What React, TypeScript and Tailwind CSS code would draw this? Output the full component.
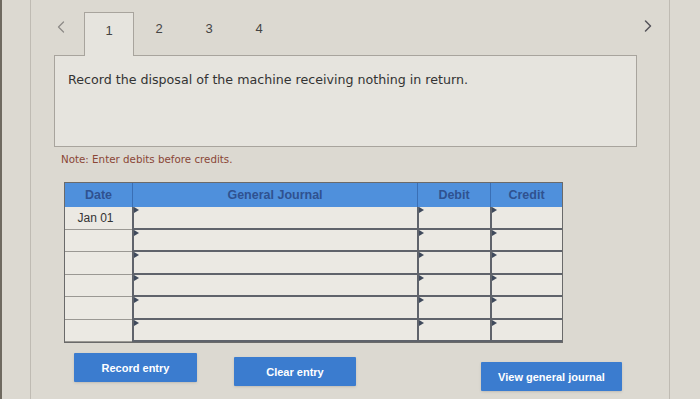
import { ChevronLeft, ChevronRight } from "lucide-react"

const rows = ["Jan 01", "", "", "", "", ""]

function Marker() {
  return (
    <span className="absolute left-0 top-0 w-0 h-0 border-t-[3px] border-b-[3px] border-l-[5px] border-t-transparent border-b-transparent border-l-[#3f4a5c]" />
  )
}

function InputCell() {
  return (
    <div className="relative h-[22.5px] bg-[#ebe9e3] border-l-2 border-b-2 border-[#5f636b]">
      <Marker />
    </div>
  )
}

export default function App() {
  return (
    <div className="w-[700px] h-[399px] bg-[#dcd9d1] border-l-2 border-[#6f6a60] overflow-hidden font-['Liberation_Sans',Arial,sans-serif]">
      <div className="ml-[28px] mr-[30px] h-full border-l border-r border-[#bfbbb3] pl-[23px] pr-[10px]">
        {/* tabs row */}
        <div className="flex items-end h-[55px]">
          <ChevronLeft className="w-[20px] h-[20px] text-[#8d8b88] mb-[18px] ml-[-3px]" strokeWidth={1.5} />
          <div className="flex ml-[13px] items-end">
            <div className="w-[50px] h-[44px] bg-[#e6e4de] border border-b-0 border-[#a8a49d] -mb-px relative z-10 flex items-start justify-center pt-[8px] text-[13px] text-[#444]">
              1
            </div>
            {["2", "3", "4"].map((t) => (
              <div key={t} className="w-[50px] h-[44px] flex items-start justify-center pt-[8px] text-[13px] text-[#444]">
                {t}
              </div>
            ))}
          </div>
          <div className="flex-1" />
          <ChevronRight className="w-[20px] h-[20px] text-[#55545a] mb-[19px] mr-[1px]" strokeWidth={1.8} />
        </div>

        {/* question box */}
        <div className="w-[583px] h-[92px] bg-[#e6e4de] border border-[#a8a49d] px-[13px] pt-[15px] font-['DejaVu_Sans',Verdana,sans-serif] text-[12.65px] text-[#333]">
          Record the disposal of the machine receiving nothing in return.
        </div>

        <p className="mt-[5px] ml-[7px] font-['DejaVu_Sans',Verdana,sans-serif] text-[10.3px] text-[#8a4636]">
          Note: Enter debits before credits.
        </p>

        {/* journal table */}
        <div className="mt-[15px] ml-[10px] w-[499px] border border-[#6a6a6a] bg-[#ebe9e3]">
          <div className="grid grid-cols-[67px_285px_73px_72px] h-[24px] bg-[#4f90dc] text-[12.5px] font-bold text-[#2f5290]">
            <div className="flex items-center justify-center">Date</div>
            <div className="flex items-center justify-center border-l border-[#3a6fb5]">General Journal</div>
            <div className="flex items-center justify-center border-l border-[#3a6fb5]">Debit</div>
            <div className="flex items-center justify-center border-l border-[#3a6fb5]">Credit</div>
          </div>
          {rows.map((d, i) => (
            <div key={i} className="grid grid-cols-[67px_285px_73px_72px]">
              <div className="h-[22.5px] border-b border-[#9a9893] flex items-center justify-center text-[12px] text-[#333] pr-[6px]">
                {d}
              </div>
              <InputCell />
              <InputCell />
              <InputCell />
            </div>
          ))}
        </div>

        {/* buttons */}
        <div className="flex items-start mt-[8px] ml-[20px]">
          <button className="w-[123px] h-[29px] mt-[2px] bg-[#3b7ccf] text-white text-[11px] font-bold rounded-[1px] shadow-sm">
            Record entry
          </button>
          <button className="w-[122px] h-[29px] mt-[6px] ml-[37px] bg-[#3b7ccf] text-white text-[11px] font-bold rounded-[1px] shadow-sm">
            Clear entry
          </button>
          <button className="w-[141px] h-[29px] mt-[11px] ml-[125px] bg-[#3b7ccf] text-white text-[11px] font-bold rounded-[1px] shadow-sm">
            View general journal
          </button>
        </div>
      </div>
    </div>
  )
}
